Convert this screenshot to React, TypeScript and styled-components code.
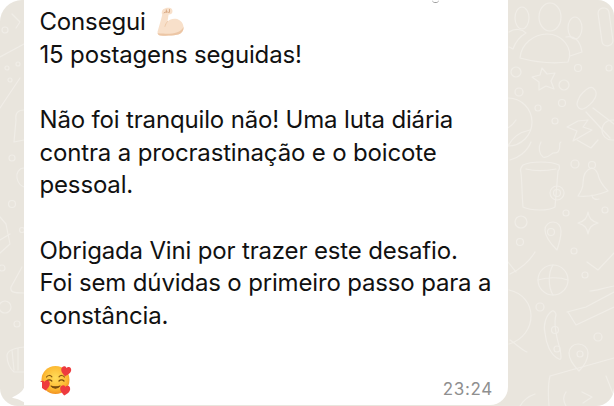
import React, { FC } from "react";
import styled, { createGlobalStyle } from "styled-components";

const GlobalStyle = createGlobalStyle`
  html, body {
    margin: 0;
    padding: 0;
    background: #ffffff;
  }
`;

const PARAGRAPHS = [
  ["Não foi tranquilo não! Uma luta diária", "contra a procrastinação e o boicote", "pessoal."],
  ["Obrigada Vini por trazer este desafio.", "Foi sem dúvidas o primeiro passo para a", "constância."],
];

const FlexedArm: FC = () => (
  <ArmSvg width="29" height="29" viewBox="0 0 32 30" preserveAspectRatio="none">
    <path
      d="M6 29.500c-2.500-.3-3.500-1.800-3.200-4L6.800 12.500 8 8C7 6.500 7.300 3.500 9 2.300 11 .8 14.500.3 17 1c2.200.7 2.800 3 2 5-.8 1.500-2.300 2-4 1.700l-1.200 7.300c2.400-2.200 5.600-3.200 9-2.800 4.600.6 8.400 4 8.700 8.500.3 4.500-3 7.300-7.500 8.100-5.500.9-12.500 1.200-18 .7z"
      fill="#f8e0ca"
    />
    <path d="M9 27.500c5 .4 11 .2 15.500-1.400 3-1 5.500-3 7-5.500.3 4.500-3 7.300-7.500 8.100-5.500.9-12.500 1.200-18 .7-1.800-.2-2.800-1-3.100-2.300 2 .4 4 .2 6.100.4z" fill="#ecc6a5" />
    <path d="M13.800 15c-1.400 1.400-2.300 3-2.800 5" stroke="#ecc6a5" strokeWidth="1" fill="none" strokeLinecap="round" />
    <path d="M10 6c1.800-1.200 3.500-1.200 5 -.5M12.500 3v2.500M16 2.600v2.800" stroke="#d6a681" strokeWidth="1" fill="none" strokeLinecap="round" />
  </ArmSvg>
);

const Heart: FC<{ x: number; y: number; r?: number }> = ({ x, y, r = 0 }) => (
  <path
    transform={`translate(${x} ${y}) rotate(${r})`}
    d="M0 5.500C-2 3.800-5 1.800-5-1.300-5-3.500-3.500-4.500-2.200-4.500-1.200-4.500-.4-4 0-3 .4-4 1.200-4.500 2.200-4.500 3.500-4.500 5-3.500 5-1.300 5 1.800 2 3.800 0 5.500z"
    fill="#ee3b3f"
  />
);

const SmilingHearts: FC = () => (
  <FaceSvg width="32" height="32" viewBox="0 0 32 32">
    <defs>
      <radialGradient id="face" cx="0.5" cy="0.42" r="0.62">
        <stop offset="0" stopColor="#ffdc5a" />
        <stop offset="0.65" stopColor="#fdbb34" />
        <stop offset="1" stopColor="#f08a1d" />
      </radialGradient>
    </defs>
    <circle cx="15.500" cy="16" r="14" fill="url(#face)" />
    <path d="M6.500 13c1.400-2 4-2 5.400-.2M19 12.800c1.400-1.800 4-1.800 5.400.2" stroke="#8a5a12" strokeWidth="1.200" fill="none" strokeLinecap="round" />
    <path d="M6.800 17c1.300-1.400 3.600-1.400 5 0M19 17c1.300-1.400 3.600-1.400 5 0" stroke="#7a4d0e" strokeWidth="1.300" fill="none" strokeLinecap="round" />
    <path d="M11 22c2.400 3 6.400 3 9 0-2.500 1-6.500 1-9 0z" stroke="#7a4d0e" strokeWidth="1.100" fill="#7a4d0e" strokeLinejoin="round" />
    <Heart x={26} y={7} r={10} />
    <Heart x={5} y={21} r={-8} />
    <Heart x={25} y={26} r={8} />
  </FaceSvg>
);

const Wallpaper: FC = () => (
  <Doodles width="614" height="406" viewBox="0 0 614 406" fill="none" stroke="#f0ede7" strokeWidth="1.200" strokeLinecap="round" strokeLinejoin="round">
    {/* left edge */}
    <circle cx="5" cy="30" r="3" />
    <circle cx="7" cy="68" r="2" />
    <circle cx="18" cy="64" r="2" />
    <circle cx="10" cy="80" r="2" />
    <path d="M0 57l24-13M12 14l8 8-4 6M0 108l20-30" />
    <path d="M24 110c-6 0-9 3-8 10l-2 22 10-2" />
    <circle cx="12" cy="158" r="3" />
    <path d="M24 168c-5 0-8 5-7 10s4 8 7 9" />
    <circle cx="12" cy="204" r="3.500" />
    <circle cx="22" cy="230" r="2.500" />
    <path d="M0 217l6 7 4 20-10 9M0 240l10-6" />
    <circle cx="2" cy="268" r="3" />
    <path d="M22 267l-11 20c-1 5 2 6 13 6" />
    <circle cx="5" cy="307" r="6" />
    <circle cx="17" cy="324" r="3" />
    <path d="M24 347c-10 1-17 3-17 9s3 13 7 16h10M12 350l2 20M18 348v22" />
    {/* right column, top */}
    <ellipse cx="522" cy="18" rx="7" ry="11" />
    <ellipse cx="550" cy="17" rx="11" ry="14" />
    <ellipse cx="575" cy="28" rx="7" ry="11" />
    <path d="M520 58c1-14 14-24 27-24 15 0 27 14 21 28-16 2-33 0-48-4z" />
    <path d="M509 32c6-4 13-3 17 1-7 4-11 10-13 16-2-1-3-2-4-2M566 37c8-2 14 3 16 15l-12 4" />
    <rect x="600" y="8" width="11" height="38" rx="5" transform="rotate(-8 605 27)" />
    <circle cx="516" cy="72" r="5" />
    <path d="M542 68l5 6 8-1-4 8 3 8-8-3-7 4 0-8-7-5 8-2z" />
    <circle cx="578" cy="68" r="3.500" />
    <circle cx="609" cy="68" r="3" />
    <circle cx="564" cy="85" r="5" />
    <circle cx="519" cy="92" r="4" />
    <circle cx="562" cy="103" r="3.500" />
    <circle cx="538" cy="108" r="3" />
    <circle cx="555" cy="121" r="3" />
    <path d="M580 96c5-6 10-10 13-8s4 6 2 10-8 10-12 11c-3 1-6-2-6-5s2-6 3-8zM593 108l21 16M586 112l24 26" />
    <circle cx="508" cy="122" r="24" />
    <path d="M486 130c10 4 24 0 30-10M508 146c4-8 12-14 22-16" />
    <path d="M578 121l-11 6 10 4-4 10 19-11-9-3 5-7z" />
    <circle cx="612" cy="130" r="10" />
    {/* right column, middle */}
    <path d="M510 160c8-2 17-8 21-18M541 142c-3 5-2 12 2 15 4 2 8-3 10-4 3 0 5 0 6-3 2-3-1-7 2-8M577 140l14 8 7-8" />
    <path d="M523 165c8-4 28-4 36 0 1 3 0 5-1 6l-3 36c-6 4-24 4-32 0-1-10-1-26-2-34-1-3 0-6 2-8zM526 169c8 2 20 2 30 0" />
    <circle cx="557" cy="193" r="7" />
    <circle cx="557" cy="193" r="3.500" />
    <circle cx="592" cy="165" r="3.500" />
    <path d="M592 168c-8 2-9 10-9 15 0 6-3 10-5 13 8 1 20-1 30-5-4-4-7-8-9-13-1-5-3-9-7-10zM592 195c0 4 4 5 7 4" />
    <circle cx="575" cy="164" r="4" />
    <circle cx="566" cy="213" r="3" />
    <circle cx="605" cy="210" r="3" />
    <path d="M588 212c1 6 3 9 10 11-7 2-9 5-10 11-1-6-3-9-10-11 7-2 9-5 10-11z" />
    <circle cx="521" cy="222" r="6" />
    <circle cx="520" cy="242" r="3.500" />
    <path d="M557 250c-6-6-12-13-12-20 0-5 4-8 8-8 5 0 8 4 8 9 0 6-2 13-4 19z" />
    <circle cx="551" cy="232" r="3.500" />
    <circle cx="574" cy="251" r="3" />
    <circle cx="585" cy="275" r="3" />
    <path d="M535 252c-5 9-16 18-25 22M508 262l8 10" />
    <circle cx="553" cy="280" r="15" />
    <path d="M538 280c10-3 22-3 30 0M553 265c-5 8-5 22 0 30" />
    <path d="M587 262l11 8 16-17" />
    {/* right column, bottom */}
    <path d="M509 290c14 3 22 14 22 26s-8 24-22 28M510 340c6 4 12 10 17 12" />
    <circle cx="540" cy="307" r="4" />
    <path d="M552 311c-6 4-9 14-7 22 1 10 5 22 14 26 3 2 2-5 1-10-3-10-7-24-4-34 0-2-2-5-4-4z" />
    <circle cx="555" cy="330" r="3.500" />
    <circle cx="557" cy="349" r="3" />
    <path d="M567 312l19-5 28-15M568 312l8 13 38-18M590 291c5 0 10-2 24-5" />
    <circle cx="598" cy="337" r="4" />
    <path d="M579 371c-6-6-10-12-10-18 0-5 4-9 9-9 6 0 10 4 10 9 0 7-4 13-9 18z" />
    <circle cx="580" cy="354" r="3" />
    <path d="M550 376l64-18M550 376c-2 8-2 18-1 30M535 394c-6 2-12 7-15 12M566 392c-3 4-3 9 0 14M582 392l10 5-9 6M606 376l8 20" />
  </Doodles>
);

const App: FC = () => (
  <>
    <GlobalStyle />
    <Screen>
      <Wallpaper />
      <Bubble>
        <SenderDescender />
        <Message>
          <Paragraph>
            <Line>
              Consegui <FlexedArm />
            </Line>
            <Line>15 postagens seguidas!</Line>
          </Paragraph>
          {PARAGRAPHS.map((paragraph) => (
            <Paragraph key={paragraph[0]}>
              {paragraph.map((line) => (
                <Line key={line}>{line}</Line>
              ))}
            </Paragraph>
          ))}
        </Message>
        <Footer>
          <SmilingHearts />
          <Time>23:24</Time>
        </Footer>
        <Tail width="30" height="24" viewBox="0 0 30 24">
          <path d="M13 0c0 6-2 10-12 15-1 1-1 1 0 1 6 1 10 4 17 7h12V0z" fill="#ffffff" />
        </Tail>
      </Bubble>
    </Screen>
  </>
);

const Screen = styled.div`
  position: relative;
  box-sizing: border-box;
  width: 614px;
  height: 406px;
  padding: 0 106px 0 24px;
  overflow: hidden;
  background: #e9e5dd;
  border-radius: 22px 16px 18px 18px;
`;

const Doodles = styled.svg`
  position: absolute;
  inset: 0;
`;

const Bubble = styled.div`
  position: relative;
  box-sizing: border-box;
  display: flex;
  flex-direction: column;
  height: 405px;
  padding: 6px 15px 0 15.5px;
  background: #ffffff;
  border-radius: 0 0 18px 0;
`;

const SenderDescender = styled.span`
  position: absolute;
  top: -3px;
  left: 408px;
  width: 7px;
  height: 5px;
  border-bottom: 1.5px solid #9a9a9a;
  border-radius: 0 0 5px 5px;
`;

const Message = styled.div`
  flex: 1;
  font-family: Inter, "Noto Sans", sans-serif;
  font-size: 24px;
  line-height: 32.67px;
  letter-spacing: -0.16px;
  color: #111111;
`;

const Paragraph = styled.div`
  & + & {
    margin-top: 32.67px;
  }
`;

const Line = styled.div`
  position: relative;
  height: 32.67px;
  white-space: nowrap;
`;

const ArmSvg = styled.svg`
  position: absolute;
  top: 1px;
  left: 115px;
`;

const FaceSvg = styled.svg`
  display: block;
  margin-bottom: 4px;
`;

const Footer = styled.div`
  display: flex;
  align-items: flex-end;
  justify-content: space-between;
  padding: 0 0 5px 0;
`;

const Time = styled.span`
  font-family: Inter, "Noto Sans", sans-serif;
  font-size: 17px;
  line-height: 21px;
  letter-spacing: 0.7px;
  color: #8f8f8f;
`;

const Tail = styled.svg`
  position: absolute;
  left: -12px;
  bottom: -1px;
`;

export default App;
